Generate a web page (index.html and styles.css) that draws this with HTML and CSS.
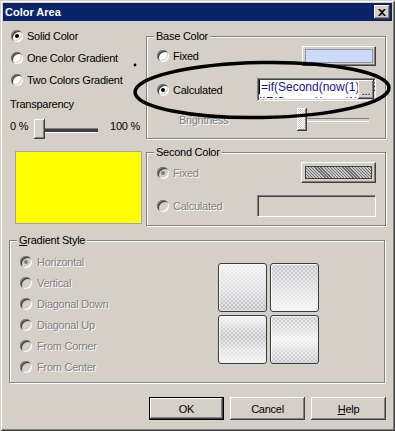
FILE: index.html
```html
<!DOCTYPE html>
<html>
<head>
<meta charset="utf-8">
<title>Color Area</title>
<link rel="stylesheet" href="styles.css">
</head>
<body>
<div class="window">
  <div class="titlebar">
    <span class="title">Color Area</span>
    <span class="close"><svg width="8" height="7" viewBox="0 0 8 7"><path d="M0 0h2l2 2 2-2h2L5 3.5 8 7H6L4 5 2 7H0l3-3.5z" fill="#000"/></svg></span>
  </div>
  <div class="content">
    <div class="top">
      <div class="leftcol">
        <div class="opt"><span class="radio checked"></span><span>Solid Color</span></div>
        <div class="opt"><span class="radio"></span><span>One Color Gradient</span></div>
        <div class="opt"><span class="radio"></span><span>Two Colors Gradient</span></div>
        <div class="lbl">Transparency</div>
        <div class="trans">
          <span class="pct0">0 %</span>
          <div class="slider"><div class="thumb"></div></div>
          <span class="pct100">100 %</span>
        </div>
        <div class="swatch-yellow"></div>
      </div>
      <div class="rightcol">
        <div class="group base">
          <span class="legend">Base Color</span>
          <div class="grow r1">
            <span class="opt-in"><span class="radio"></span><span>Fixed</span></span>
            <span class="swatch-blue"><span class="swatch-fill"></span></span>
          </div>
          <div class="grow r2">
            <span class="opt-in"><span class="radio checked"></span><span>Calculated</span></span>
            <div class="edit">
              <div class="formula"><span class="caret"></span>=if(Second(now(1))&gt;30,<br>IIF(Second(now(1)) mod 2=0,</div>
              <span class="dots">...</span>
            </div>
          </div>
          <div class="grow r3">
            <span class="blabel dis-t">Brightness</span>
            <div class="bslider"><div class="bthumb"></div></div>
          </div>
        </div>
        <div class="group second">
          <span class="legend">Second Color</span>
          <div class="grow r1">
            <span class="opt-in"><span class="radio dis checked"></span><span class="dis-t">Fixed</span></span>
            <span class="hatch-btn"><span class="hatch"></span></span>
          </div>
          <div class="grow r2b">
            <span class="opt-in"><span class="radio dis"></span><span class="dis-t">Calculated</span></span>
            <div class="edit edit-dis"></div>
          </div>
        </div>
      </div>
    </div>
    <div class="group grad">
      <span class="legend"><u>G</u>radient Style</span>
      <div class="glist">
        <div class="gopt"><span class="radio dis checked"></span><span class="dis-t">Horizontal</span></div>
        <div class="gopt"><span class="radio dis"></span><span class="dis-t">Vertical</span></div>
        <div class="gopt"><span class="radio dis"></span><span class="dis-t">Diagonal Down</span></div>
        <div class="gopt"><span class="radio dis"></span><span class="dis-t">Diagonal Up</span></div>
        <div class="gopt"><span class="radio dis"></span><span class="dis-t">From Corner</span></div>
        <div class="gopt"><span class="radio dis"></span><span class="dis-t">From Center</span></div>
      </div>
      <div class="thumbs">
        <div class="tg tg1"></div>
        <div class="tg tg2"></div>
        <div class="tg tg3"></div>
        <div class="tg tg4"></div>
      </div>
    </div>
    <div class="buttons">
      <div class="btn default"><span>OK</span></div>
      <div class="btn"><span>Cancel</span></div>
      <div class="btn"><span><u>H</u>elp</span></div>
    </div>
  </div>
  <svg class="annot" width="395" height="431" viewBox="0 0 395 431">
    <ellipse cx="262" cy="90" rx="127" ry="27.5" transform="rotate(-1 262 90)" fill="none" stroke="#000" stroke-width="3.5"/>
    <circle cx="135" cy="65" r="1.4" fill="#000"/>
  </svg>
</div>
</body>
</html>
```

FILE: styles.css
```css
* { box-sizing: border-box; }
html, body { margin: 0; padding: 0; }
body {
  background: #D4D0C8;
  font-family: "Liberation Sans", Arial, sans-serif;
  font-size: 11px;
  color: #000;
  letter-spacing: -0.25px;
}
.window {
  position: relative;
  width: 395px;
  height: 431px;
  background: #D4D0C8;
  padding: 3px;
  overflow: hidden;
  box-shadow: inset 1px 1px 0 #D4D0C8, inset -1px -1px 0 #404040,
              inset 2px 2px 0 #fff, inset -2px -2px 0 #808080;
}
.titlebar {
  height: 18px;
  background: #0A246A;
  color: #fff;
  font-weight: bold;
  display: flex;
  align-items: center;
  justify-content: space-between;
  padding: 0 2px 0 2px;
  letter-spacing: 0;
}
.close {
  width: 16px;
  height: 14px;
  background: #D4D0C8;
  display: flex;
  align-items: center;
  justify-content: center;
  box-shadow: inset -1px -1px 0 #404040, inset 1px 1px 0 #fff, inset -2px -2px 0 #808080;
}
.content { padding: 0 6px; }
.top { display: flex; }

/* left column */
.leftcol { width: 137px; padding-top: 4px; }
.opt { display: flex; align-items: center; gap: 4px; height: 22px; padding-left: 2px; }
.lbl { margin-top: 2px; height: 22px; line-height: 22px; padding-left: 1px; }
.trans { display: flex; align-items: flex-start; height: 24px; }
.pct0 { width: 25px; padding-left: 1px; line-height: 22px; }
.pct100 { margin-left: auto; padding-right: 6px; line-height: 22px; }
.slider { position: relative; width: 64px; height: 20px; margin-top: 4px; }
.slider::before {
  content: "";
  position: absolute;
  left: 2px; right: 0; top: 9px;
  height: 3px;
  border-top: 1px solid #808080;
  border-bottom: 1px solid #fff;
  background: #404040;
}
.thumb {
  position: relative;
  width: 11px;
  height: 20px;
  background: #D4D0C8;
  box-shadow: inset -1px -1px 0 #404040, inset 1px 1px 0 #fff, inset -2px -2px 0 #808080;
}
.swatch-yellow {
  margin-top: 12px;
  margin-left: 6px;
  width: 127px;
  height: 73px;
  background: #FFFF00;
  border: 1px solid #A3A0B6;
}

/* radios */
.radio {
  position: relative;
  flex: none;
  width: 12px;
  height: 12px;
  border-radius: 50%;
  background: #fff;
  box-shadow: inset 1px 1px 0 #808080, inset -1px -1px 0 #fff,
              inset 2px 2px 0 #404040, inset -2px -2px 0 #D4D0C8;
}
.radio.checked::after {
  content: "";
  position: absolute;
  left: 4px; top: 4px;
  width: 4px; height: 4px;
  border-radius: 50%;
  background: #000;
}
.radio.dis { background: #D4D0C8; }
.radio.dis.checked::after { background: #808080; }
.dis-t { color: #808080; text-shadow: 1px 1px 0 #fff; }

/* groups */
.rightcol { width: 240px; padding-top: 15px; }
.group {
  position: relative;
  border: 1px solid #808080;
  box-shadow: 1px 1px 0 #fff, inset 1px 1px 0 #fff;
}
.legend {
  position: absolute;
  top: -8px;
  left: 7px;
  padding: 0 2px;
  line-height: 14px;
  background: #D4D0C8;
  white-space: nowrap;
}
.base { height: 103px; padding: 8px 9px 0 10px; }
.grow { display: flex; align-items: center; }
.opt-in { display: flex; align-items: center; gap: 4px; }
.r1 { height: 21px; }
.r2 { height: 23px; margin-top: 12px; }
.r3 { height: 23px; margin-top: 7px; }
.r2b { height: 22px; margin-top: 12px; }

.swatch-blue {
  margin-left: auto;
  width: 74px;
  height: 20px;
  padding: 2px;
  background: #D4D0C8;
  border: 1px solid;
  border-color: #fff #404040 #404040 #fff;
  box-shadow: inset -1px -1px 0 #808080;
  display: flex;
}
.swatch-fill {
  flex: 1;
  background: #CCDCF8;
  border: 1px solid #8E96A8;
}
.edit {
  position: relative;
  margin-left: auto;
  width: 119px;
  height: 23px;
  background: #fff;
  border: 1px solid;
  border-color: #808080 #fff #fff #808080;
  box-shadow: inset 1px 1px 0 #404040, inset -1px -1px 0 #D4D0C8;
  overflow: hidden;
}
.edit-dis { height: 22px; background: #D4D0C8; }
.formula {
  height: 18px;
  margin: 1px 0 0 1px;
  overflow: hidden;
  color: #16168C;
  font-size: 12px;
  line-height: 15px;
  letter-spacing: 0;
  white-space: nowrap;
}
.caret {
  display: inline-block;
  width: 1px;
  height: 14px;
  margin-right: 1px;
  background: #000;
  vertical-align: -3px;
}
.dots {
  position: absolute;
  right: 1px;
  top: 1px;
  bottom: 1px;
  width: 16px;
  background: #D4D0C8;
  box-shadow: inset -1px -1px 0 #404040, inset 1px 1px 0 #fff, inset -2px -2px 0 #808080;
  font-size: 11px;
  line-height: 22px;
  text-align: center;
  letter-spacing: 0;
}
.blabel { padding-left: 22px; }
.bslider { position: relative; margin-left: auto; margin-right: 7px; width: 72px; height: 23px; }
.bslider::before {
  content: "";
  position: absolute;
  left: 2px; right: 0; top: 10px;
  height: 2px;
  border-top: 1px solid #808080;
  border-bottom: 1px solid #fff;
}
.bthumb {
  position: relative;
  width: 10px;
  height: 23px;
  background: repeating-conic-gradient(#fff 0 25%, #D4D0C8 0 50%) 0 0 / 2px 2px;
  box-shadow: inset -1px -1px 0 #404040, inset 1px 1px 0 #fff, inset -2px -2px 0 #808080;
}
.second { margin-top: 13px; height: 74px; padding: 9px 9px 0 10px; }
.hatch-btn {
  margin-left: auto;
  width: 75px;
  height: 21px;
  padding: 3px;
  background: #D4D0C8;
  border: 1px solid;
  border-color: #fff #404040 #404040 #fff;
  box-shadow: inset -1px -1px 0 #808080;
  display: flex;
}
.hatch {
  flex: 1;
  border: 1px solid #404040;
  background: repeating-linear-gradient(45deg, #6E6E6E 0 1px, #C8C8C8 1px 2.2px);
}

/* gradient style */
.grad {
  margin-top: 14px;
  width: 376px;
  height: 143px;
  padding: 10px 0 0 10px;
  display: flex;
}
.glist { width: 198px; }
.gopt { display: flex; align-items: center; gap: 5px; height: 21px; }
.thumbs {
  margin-top: 12px;
  display: grid;
  grid-template-columns: 49px 49px;
  grid-auto-rows: 49px;
  gap: 3px;
}
.tg {
  border: 1px solid #3C3C3C;
  border-radius: 3px;
  box-shadow: inset 1px 1px 0 rgba(255,255,255,0.8);
}
.tg1 {
  background: repeating-conic-gradient(rgba(255,255,255,0.5) 0 25%, transparent 0 50%) 0 0 / 4px 4px,
              linear-gradient(#F0F0F2, #DDDDE0 55%, #C0C0C4 95%, #D8D8DA);
}
.tg2 {
  background: repeating-conic-gradient(rgba(255,255,255,0.5) 0 25%, transparent 0 50%) 0 0 / 4px 4px,
              linear-gradient(#C2C2C6, #CECED2 25%, #EAEAEC 80%, #F2F2F4);
}
.tg3 {
  background: repeating-conic-gradient(rgba(255,255,255,0.5) 0 25%, transparent 0 50%) 0 0 / 4px 4px,
              linear-gradient(#F0F0F2, #C4C4C8 45%, #E2E2E4 75%, #F0F0F2);
}
.tg4 {
  background: repeating-conic-gradient(rgba(255,255,255,0.5) 0 25%, transparent 0 50%) 0 0 / 4px 4px,
              linear-gradient(#C6C6CA, #F0F0F2 50%, #C4C4C8);
}

/* buttons */
.buttons {
  margin-top: 14px;
  display: flex;
  justify-content: flex-end;
  gap: 6px;
}
.btn {
  width: 75px;
  height: 23px;
  background: #D4D0C8;
  display: flex;
  align-items: center;
  justify-content: center;
  box-shadow: inset -1px -1px 0 #404040, inset 1px 1px 0 #fff, inset -2px -2px 0 #808080;
}
.btn.default {
  border: 1px solid #000;
}
.annot {
  position: absolute;
  left: 0;
  top: 0;
  pointer-events: none;
}
```
